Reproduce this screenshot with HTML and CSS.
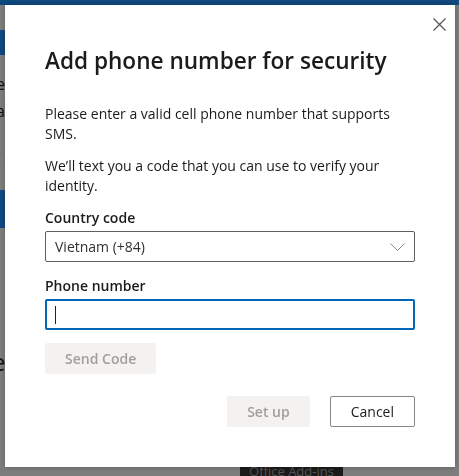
FILE: index.html
```html
<!DOCTYPE html>
<html lang="en">

<head>
    <meta charset="UTF-8">
    <meta name="viewport" content="width=device-width, initial-scale=1.0">
    <title>Add phone number</title>
    <link rel="stylesheet" href="styles.css">
</head>

<body>

    <!-- page behind the dialog -->
    <div class="page">
        <div class="top-bar"></div>
        <div class="page-body">
            <div class="side-bits">
                <div class="bit-blue small"></div>
                <span class="bit-text t1">e</span>
                <span class="bit-text t2">a</span>
                <span class="bit-text t3">(</span>
                <div class="bit-blue big"></div>
                <span class="bit-text t4">e</span>
            </div>
        </div>
        <div class="page-foot">
            <span class="addins-tag">Office Add-ins</span>
        </div>
    </div>

    <div class="overlay">
        <div class="dialog">
            <button class="close-btn" aria-label="Close">
                <svg width="13" height="13" viewBox="0 0 13 13">
                    <path d="M0.5 0.5 L12.5 12.5 M12.5 0.5 L0.5 12.5" stroke="#555" stroke-width="1.2" fill="none" />
                </svg>
            </button>

            <h1 class="dialog-title">Add phone number for security</h1>

            <p class="dialog-text">Please enter a valid cell phone number that supports SMS.</p>
            <p class="dialog-text">We’ll text you a code that you can use to verify your identity.</p>

            <form class="phone-form">
                <label class="field-label" for="countryCode">Country code</label>
                <div class="select-box" id="countryCode">
                    <span>Vietnam (+84)</span>
                    <svg width="15" height="8" viewBox="0 0 15 8">
                        <path d="M0.5 0.5 L7.5 7.5 L14.5 0.5" stroke="#8a8886" stroke-width="1" fill="none" />
                    </svg>
                </div>

                <label class="field-label" for="phoneNumber">Phone number</label>
                <div class="text-input" id="phoneNumber"><span class="caret"></span></div>

                <div>
                    <button type="button" class="btn btn-disabled">Send Code</button>
                </div>

                <div class="actions">
                    <button type="button" class="btn btn-disabled btn-setup">Set up</button>
                    <button type="button" class="btn btn-default">Cancel</button>
                </div>
            </form>
        </div>
    </div>

</body>

</html>
```

FILE: styles.css
```css
body {
    margin: 0;
    font-family: "Open Sans", "Noto Sans", sans-serif;
    background-color: #7e7e7e;
    height: 476px;
    overflow: hidden;
}

.page {
    height: 476px;
    display: flex;
    flex-direction: column;
}

.top-bar {
    height: 5px;
    background-color: #0f4a80;
}

.page-body {
    flex: 1;
}

.side-bits {
    width: 5px;
    overflow: hidden;
    position: relative;
    height: 100%;
}

.bit-blue {
    position: absolute;
    left: 0;
    width: 5px;
    background-color: #0f4a80;
}

.bit-blue.small {
    top: 25px;
    height: 25px;
}

.bit-blue.big {
    top: 185px;
    height: 38px;
}

.bit-text {
    position: absolute;
    left: -4px;
    font-size: 16px;
    color: #111;
}

.t1 { top: 68px; }
.t2 { top: 95px; }
.t3 { top: 143px; }
.t4 { top: 340px; font-size: 24px; left: -8px; }

.page-foot {
    height: 9px;
    position: relative;
}

.addins-tag {
    position: absolute;
    left: 240px;
    top: 0;
    width: 103px;
    height: 9px;
    overflow: hidden;
    background-color: #1b1b1b;
    color: #555;
    font-size: 13px;
    line-height: 8px;
    text-align: center;
}

.overlay {
    position: fixed;
    inset: 0;
}

.dialog {
    position: absolute;
    left: 5px;
    top: 5px;
    width: 450px;
    height: 462px;
    box-sizing: border-box;
    padding: 38px 40px 40px 40px;
    background-color: #fff;
    box-shadow: 0 0 6px rgba(0, 0, 0, 0.25);
    color: #1b1b1b;
}

.close-btn {
    position: absolute;
    top: 8px;
    right: 5px;
    width: 22px;
    height: 22px;
    padding: 0;
    border: none;
    background: none;
    display: flex;
    align-items: center;
    justify-content: center;
}

.dialog-title {
    margin: 0 0 25px 0;
    font-size: 22.6px;
    line-height: 36px;
    font-weight: 600;
    color: #1b1b1b;
}

.dialog-text {
    margin: 0 0 12px 0;
    font-size: 14px;
    line-height: 20px;
    color: #1b1b1b;
}

.phone-form {
    display: flex;
    flex-direction: column;
}

.field-label {
    font-size: 14px;
    line-height: 20px;
    font-weight: 600;
    margin-top: 0;
    margin-bottom: 3px;
}

.select-box {
    height: 31px;
    box-sizing: border-box;
    border: 1px solid #605e5c;
    border-radius: 2px;
    padding: 0 9px;
    display: flex;
    align-items: center;
    justify-content: space-between;
    font-size: 14px;
    color: #323130;
    margin-bottom: 14px;
}

.text-input {
    height: 31px;
    box-sizing: border-box;
    border: 2px solid #0067b8;
    border-radius: 2px;
    padding: 0 8px;
    display: flex;
    align-items: center;
    margin-bottom: 13px;
}

.caret {
    width: 1px;
    height: 18px;
    background-color: #222;
}

.btn {
    height: 31px;
    box-sizing: border-box;
    padding: 0 20px;
    font-family: inherit;
    font-size: 14px;
    font-weight: 600;
    border-radius: 2px;
}

.btn-disabled {
    min-width: 110px;
    border: none;
    background-color: #f3f2f1;
    color: #a19f9d;
}

.actions {
    margin-top: 22px;
    display: flex;
    justify-content: flex-end;
    gap: 20px;
}

.btn-setup {
    min-width: 82px;
}

.btn-default {
    min-width: 84px;
    border: 1px solid #8a8886;
    background-color: #fff;
    color: #1b1b1b;
    font-weight: 400;
}
```
